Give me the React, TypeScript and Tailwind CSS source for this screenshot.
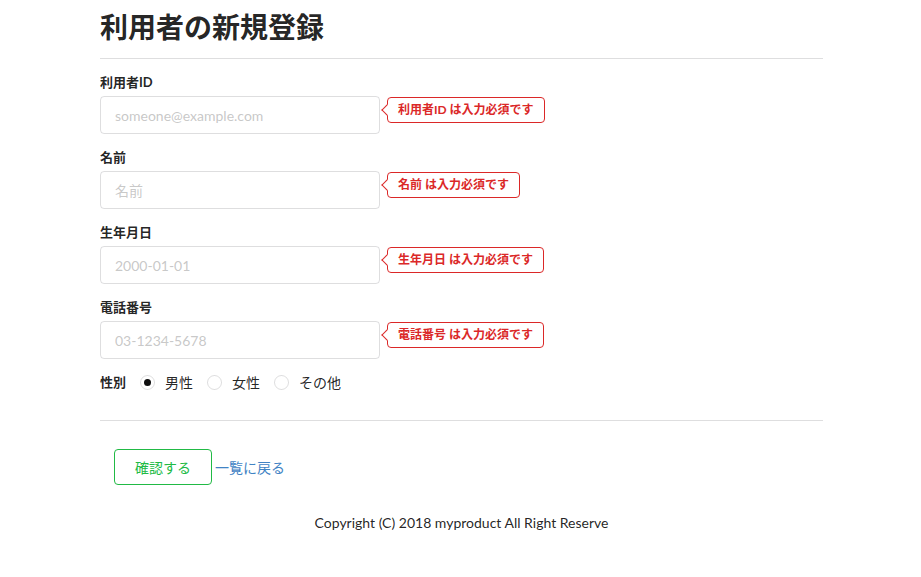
import React from "react";

const font = { fontFamily: "Lato, 'Noto Sans CJK JP', 'Helvetica Neue', Arial, sans-serif" };

function Field({ label, placeholder, error }: { label: string; placeholder: string; error: string }) {
  return (
    <div className="mb-[14px]">
      <label className="block text-[13px] font-bold leading-[19px] mb-[4px] text-[rgba(0,0,0,0.87)]">{label}</label>
      <div className="flex items-center">
        <input
          placeholder={placeholder}
          className="w-[280px] h-[38px] px-[14px] text-[14px] border border-[rgba(34,36,38,0.15)] rounded-[4px] outline-none placeholder:text-[rgba(191,191,191,0.87)]"
          style={font}
        />
        <div className="relative ml-[7px] mt-[-11px] h-[26px] px-[10px] flex items-center border border-[#db2828] rounded-[4px] bg-white text-[#db2828] text-[12px] font-bold leading-none">
          <span className="absolute left-[-5px] top-[8px] w-[8px] h-[8px] bg-white border-l border-b border-[#db2828] rotate-45"></span>
          <span className="relative">{error}</span>
        </div>
      </div>
    </div>
  );
}

function Radio({ label, checked, last }: { label: string; checked?: boolean; last?: boolean }) {
  return (
    <div className={last ? "flex items-center" : "flex items-center mr-[14px]"}>
      <span className="w-[15px] h-[15px] rounded-full border border-[rgba(34,36,38,0.15)] flex items-center justify-center">
        {checked && <span className="w-[7px] h-[7px] rounded-full bg-[rgba(0,0,0,0.95)]"></span>}
      </span>
      <span className="ml-[10px] text-[14px] text-[rgba(0,0,0,0.87)] leading-[19px]">{label}</span>
    </div>
  );
}

export default function App() {
  return (
    <div className="bg-white min-h-[577px] w-full" style={font}>
      <div className="ml-[100px] w-[723px] pt-[9px]">
        <h1 className="text-[28px] font-bold leading-[36px] text-[rgba(0,0,0,0.87)]">利用者の新規登録</h1>
        <div className="mt-[13px] mb-[14px] border-t border-[rgba(34,36,38,0.15)]"></div>
        <Field label="利用者ID" placeholder="someone@example.com" error="利用者ID は入力必須です" />
        <Field label="名前" placeholder="名前" error="名前 は入力必須です" />
        <Field label="生年月日" placeholder="2000-01-01" error="生年月日 は入力必須です" />
        <Field label="電話番号" placeholder="03-1234-5678" error="電話番号 は入力必須です" />
        <div className="flex items-center">
          <span className="text-[13px] font-bold leading-[19px] text-[rgba(0,0,0,0.87)] mr-[14px]">性別</span>
          <Radio label="男性" checked />
          <Radio label="女性" />
          <Radio label="その他" last />
        </div>
        <div className="mt-[28px] border-t border-[rgba(34,36,38,0.15)]"></div>
        <div className="flex items-center mt-[28px] ml-[14px]">
          <button className="w-[98px] h-[36px] rounded-[4px] border border-[#21ba45] text-[#21ba45] text-[14px] bg-white" style={font}>確認する</button>
          <a className="ml-[3px] text-[14px] text-[#4183c4]">一覧に戻る</a>
        </div>
        <div className="mt-[28px] text-center text-[14px] text-[rgba(0,0,0,0.87)] leading-[20px]">Copyright (C) 2018 myproduct All Right Reserve</div>
      </div>
    </div>
  );
}
